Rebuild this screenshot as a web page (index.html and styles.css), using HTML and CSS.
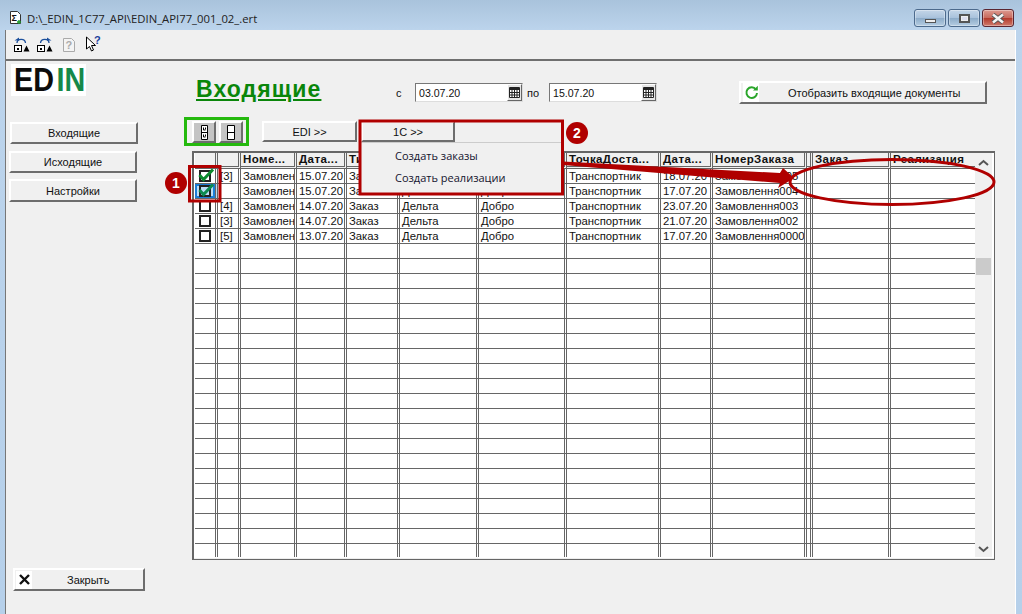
FILE: index.html
```html
<!DOCTYPE html>
<html lang="ru">
<head>
<meta charset="utf-8">
<title>EDIN</title>
<link rel="stylesheet" href="styles.css">
</head>
<body>
<div class="window">
  <header class="titlebar">
    <svg class="doc-icon" width="13" height="14" viewBox="0 0 13 14"><path d="M1.5.5h7l3 3v9h-10z" fill="#fff" stroke="#333"/><text x="2.5" y="10" class="sigma">Σ</text><path d="M10 9v4M8 11h4" stroke="#1a9a2a" stroke-width="1.4"/></svg>
    <span class="title-text">D:\_EDIN_1C77_API\EDIN_API77_001_02_.ert</span>
    <div class="win-btns">
      <span class="win-btn"><i class="glyph-min"></i></span>
      <span class="win-btn"><i class="glyph-max"></i></span>
      <span class="win-btn win-close"><svg width="16" height="11" viewBox="0 0 16 11"><path d="M3 1.5l10 8M13 1.5l-10 8" stroke="#555" stroke-width="4.4"/><path d="M3 1.5l10 8M13 1.5l-10 8" stroke="#f4f4f4" stroke-width="2.6"/></svg></span>
    </div>
  </header>
  <div class="client">
    <div class="toolbar">
      <svg width="18" height="16" viewBox="0 0 18 16"><path d="M4 6C4 1.500 12 1 12.500 6" fill="none" stroke="#1b4f9c" stroke-width="1.3"/><path d="M1.500 3.500h4.500v-3z" fill="#1b4f9c"/><rect x="1.500" y="8.500" width="7" height="6" fill="#fff" stroke="#000"/><rect x="4" y="11" width="2" height="2"/><path d="M10.500 14.500l3-6 3 6z"/></svg>
      <svg width="18" height="16" viewBox="0 0 18 16"><path d="M13 6C13 1.500 5 1 4.500 6" fill="none" stroke="#1b4f9c" stroke-width="1.3"/><path d="M15.500 3.500h-4.500v-3z" fill="#1b4f9c"/><rect x="1.500" y="8.500" width="7" height="6" fill="#fff" stroke="#000"/><rect x="4" y="11" width="2" height="2"/><path d="M10.500 14.500l3-6 3 6z"/></svg>
      <svg class="tool-help" width="14" height="16" viewBox="0 0 14 16"><path d="M1.500 1.500h8l3 3v10h-11z" fill="#f4f4f4" stroke="#aaa"/><text x="3.500" y="12" class="help-q">?</text></svg>
      <svg class="tool-cursor" width="16" height="17" viewBox="0 0 16 17"><path d="M1.500 1v12l3-2.500 2 4.500 2-1-2-4.500h4z" fill="#fff" stroke="#000"/><text x="9" y="8" class="cursor-q">?</text></svg>
    </div>
    <div class="form">
      <aside class="side">
        <div class="logo"><div class="logo-text"><span>ED</span><span class="logo-green">IN</span></div></div>
        <nav class="side-nav">
          <button class="btn nav-in">Входящие</button>
          <button class="btn nav-out">Исходящие</button>
          <button class="btn nav-set">Настройки</button>
        </nav>
        <button class="btn btn-close">
          <span class="btn-icon"><svg width="15" height="15" viewBox="0 0 15 15"><path d="M3 3l9 9M12 3l-9 9" stroke="#111" stroke-width="2.400"/></svg></span>
          <span class="btn-label">Закрыть</span>
        </button>
      </aside>
      <main class="main">
        <div class="head">
          <h1 class="page-title">Входящие</h1>
          <span class="date-label date-from">с</span>
          <div class="date-field"><span class="date-value">03.07.20</span><span class="cal"><svg width="11" height="11" viewBox="0 0 11 11"><path d="M.5.500h10v10H.5z" fill="#fff" stroke="#222"/><path d="M1 1h9v2H1z" fill="#222"/><path d="M3 3v7M5.500 3v7M8 3v7M1 5.500h9M1 8h9" stroke="#222"/></svg></span></div>
          <span class="date-label date-to">по</span>
          <div class="date-field"><span class="date-value">15.07.20</span><span class="cal"><svg width="11" height="11" viewBox="0 0 11 11"><path d="M.5.500h10v10H.5z" fill="#fff" stroke="#222"/><path d="M1 1h9v2H1z" fill="#222"/><path d="M3 3v7M5.500 3v7M8 3v7M1 5.500h9M1 8h9" stroke="#222"/></svg></span></div>
          <button class="btn btn-refresh">
            <span class="btn-icon"><svg width="15" height="15" viewBox="0 0 15 15"><path d="M12 4.500A5.300 5.300 0 1 0 13 8" fill="none" stroke="#2aa52a" stroke-width="2"/><path d="M9 5.500h4.800V.8z" fill="#2aa52a"/></svg></span>
            <span class="btn-label">Отобразить входящие документы</span>
          </button>
        </div>
        <div class="tools">
          <button class="btn btn-square"><svg width="7" height="15" viewBox="0 0 7 15"><path d="M.5.500h6v14h-6zM.5 7.500h6" fill="#fff" stroke="#000"/><path d="M2.500 2.500v2.500h2M2.500 9.500v2.500h2M4.500 2.500v2M4.500 9.500v2" fill="none" stroke="#000"/></svg></button>
          <button class="btn btn-square btn-square-2"><svg width="8" height="15" viewBox="0 0 8 15"><path d="M.5.500h7v14h-7zM.5 7.500h7" fill="#fff" stroke="#000"/></svg></button>
          <button class="btn btn-edi">EDI &gt;&gt;</button>
          <div class="dropdown">
            <button class="btn btn-1c">1С &gt;&gt;</button>
            <div class="menu">
              <div class="menu-item">Создать заказы</div>
              <div class="menu-item">Создать реализации</div>
            </div>
          </div>
        </div>
        <div class="grid">
          <div class="grid-body">
            <table class="data">
              <colgroup><col class="c1"><col class="c2"><col class="c3"><col class="c4"><col class="c5"><col class="c6"><col class="c7"><col class="c8"><col class="c9"><col class="c10"><col class="c11"><col class="c12"><col class="c13"></colgroup>
              <thead>
                <tr><th></th><th></th><th>Номе...</th><th>Дата...</th><th>Тип</th><th></th><th></th><th>ТочкаДоста...</th><th>Дата...</th><th>НомерЗаказа</th><th></th><th>Заказ</th><th>Реализация</th></tr>
              </thead>
              <tbody>
                <tr><td class="chk"><i class="box"></i><svg class="tick" width="17" height="14" viewBox="0 0 17 14"><path d="M1.500 7l4 4.500 9.500-10" fill="none" stroke="#0c8a2e" stroke-width="3"/></svg></td><td>[3]</td><td>Замовлення</td><td>15.07.20</td><td>Заказ</td><td>Дельта</td><td>Добро</td><td>Транспортник</td><td>18.07.20</td><td>Замовлення005</td><td></td><td></td><td></td></tr>
                <tr><td class="chk chk-sel"><i class="box"></i><svg class="tick" width="17" height="14" viewBox="0 0 17 14"><path d="M1.500 7l4 4.500 9.500-10" fill="none" stroke="#0c8a4e" stroke-width="3"/></svg></td><td></td><td>Замовлення</td><td>15.07.20</td><td>Заказ</td><td>Дельта</td><td>Добро</td><td>Транспортник</td><td>17.07.20</td><td>Замовлення004</td><td></td><td></td><td></td></tr>
                <tr><td class="chk"><i class="box"></i></td><td>[4]</td><td>Замовлення</td><td>14.07.20</td><td>Заказ</td><td>Дельта</td><td>Добро</td><td>Транспортник</td><td>23.07.20</td><td>Замовлення003</td><td></td><td></td><td></td></tr>
                <tr><td class="chk"><i class="box"></i></td><td>[3]</td><td>Замовлення</td><td>14.07.20</td><td>Заказ</td><td>Дельта</td><td>Добро</td><td>Транспортник</td><td>21.07.20</td><td>Замовлення002</td><td></td><td></td><td></td></tr>
                <tr><td class="chk"><i class="box"></i></td><td>[5]</td><td>Замовлення</td><td>13.07.20</td><td>Заказ</td><td>Дельта</td><td>Добро</td><td>Транспортник</td><td>17.07.20</td><td>Замовлення0000</td><td></td><td></td><td></td></tr>
                <tr><td></td><td></td><td></td><td></td><td></td><td></td><td></td><td></td><td></td><td></td><td></td><td></td><td></td></tr>
                <tr><td></td><td></td><td></td><td></td><td></td><td></td><td></td><td></td><td></td><td></td><td></td><td></td><td></td></tr>
                <tr><td></td><td></td><td></td><td></td><td></td><td></td><td></td><td></td><td></td><td></td><td></td><td></td><td></td></tr>
                <tr><td></td><td></td><td></td><td></td><td></td><td></td><td></td><td></td><td></td><td></td><td></td><td></td><td></td></tr>
                <tr><td></td><td></td><td></td><td></td><td></td><td></td><td></td><td></td><td></td><td></td><td></td><td></td><td></td></tr>
                <tr><td></td><td></td><td></td><td></td><td></td><td></td><td></td><td></td><td></td><td></td><td></td><td></td><td></td></tr>
                <tr><td></td><td></td><td></td><td></td><td></td><td></td><td></td><td></td><td></td><td></td><td></td><td></td><td></td></tr>
                <tr><td></td><td></td><td></td><td></td><td></td><td></td><td></td><td></td><td></td><td></td><td></td><td></td><td></td></tr>
                <tr><td></td><td></td><td></td><td></td><td></td><td></td><td></td><td></td><td></td><td></td><td></td><td></td><td></td></tr>
                <tr><td></td><td></td><td></td><td></td><td></td><td></td><td></td><td></td><td></td><td></td><td></td><td></td><td></td></tr>
                <tr><td></td><td></td><td></td><td></td><td></td><td></td><td></td><td></td><td></td><td></td><td></td><td></td><td></td></tr>
                <tr><td></td><td></td><td></td><td></td><td></td><td></td><td></td><td></td><td></td><td></td><td></td><td></td><td></td></tr>
                <tr><td></td><td></td><td></td><td></td><td></td><td></td><td></td><td></td><td></td><td></td><td></td><td></td><td></td></tr>
                <tr><td></td><td></td><td></td><td></td><td></td><td></td><td></td><td></td><td></td><td></td><td></td><td></td><td></td></tr>
                <tr><td></td><td></td><td></td><td></td><td></td><td></td><td></td><td></td><td></td><td></td><td></td><td></td><td></td></tr>
                <tr><td></td><td></td><td></td><td></td><td></td><td></td><td></td><td></td><td></td><td></td><td></td><td></td><td></td></tr>
                <tr><td></td><td></td><td></td><td></td><td></td><td></td><td></td><td></td><td></td><td></td><td></td><td></td><td></td></tr>
                <tr><td></td><td></td><td></td><td></td><td></td><td></td><td></td><td></td><td></td><td></td><td></td><td></td><td></td></tr>
                <tr><td></td><td></td><td></td><td></td><td></td><td></td><td></td><td></td><td></td><td></td><td></td><td></td><td></td></tr>
                <tr><td></td><td></td><td></td><td></td><td></td><td></td><td></td><td></td><td></td><td></td><td></td><td></td><td></td></tr>
                <tr><td></td><td></td><td></td><td></td><td></td><td></td><td></td><td></td><td></td><td></td><td></td><td></td><td></td></tr>
              </tbody>
            </table>
          </div>
          <div class="scrollbar">
            <svg width="11" height="8" viewBox="0 0 11 8"><path d="M1 6l4.500-4 4.500 4" fill="none" stroke="#555" stroke-width="2"/></svg>
            <span class="thumb"></span>
            <svg width="11" height="8" viewBox="0 0 11 8"><path d="M1 2l4.500 4 4.500-4" fill="none" stroke="#555" stroke-width="2"/></svg>
          </div>
        </div>
      </main>
    </div>
  </div>
  <svg class="notes" width="1022" height="614" viewBox="0 0 1022 614">
    <rect x="185.500" y="118.500" width="62" height="26" fill="none" stroke="#25b90e" stroke-width="3"/>
    <rect x="189.500" y="166.500" width="30.500" height="34.500" fill="none" stroke="#b00000" stroke-width="3"/>
    <rect x="360" y="121" width="202.500" height="73" fill="none" stroke="#b00000" stroke-width="3"/>
    <path d="M563 161.500L780 173 783 168 794 178 778 188 780 183 563 165z" fill="#b00000"/>
    <ellipse cx="892" cy="182" rx="102" ry="22.500" fill="none" stroke="#b00000" stroke-width="3"/>
    <circle cx="176" cy="183" r="11" fill="#b00000"/>
    <text x="176" y="188" class="badge-num">1</text>
    <circle cx="577" cy="133" r="11" fill="#b00000"/>
    <text x="577" y="138" class="badge-num">2</text>
  </svg>
</div>
</body>
</html>
```
FILE: styles.css
```css
* { box-sizing: border-box; }
html, body { margin: 0; padding: 0; }
body { width: 1022px; height: 614px; overflow: hidden; font-family: "Liberation Sans", Arial, sans-serif; font-size: 12px; color: #111; }

.window { position: relative; width: 1022px; height: 614px; display: flex; flex-direction: column; background: linear-gradient(#a9c3dc 0, #bcd4ec 30px, #b6d0ea 100%); padding: 0 6px 0 5px; }

.titlebar { height: 30px; display: flex; align-items: center; padding: 0 2px 0 4px; flex: none; }
.doc-icon { margin-right: 5px; margin-top: 6px; }
.sigma { font: bold 9px "Liberation Sans", sans-serif; fill: #111; }
.title-text { font-family: "Open Sans", sans-serif; font-size: 11.3px; color: #222; margin-top: 6px; }
.win-btns { margin-left: auto; display: flex; gap: 2px; align-self: flex-start; margin-top: 9px; }
.win-btn { width: 32px; height: 18px; border: 1px solid #4c6a8c; border-radius: 3px; background: linear-gradient(#c4d6e8 0, #a9c2dc 48%, #8dacc9 52%, #b5cde2 100%); display: flex; align-items: center; justify-content: center; box-shadow: inset 0 0 0 1px rgba(255,255,255,.35); }
.glyph-min { width: 11px; height: 4px; margin-top: 5px; background: #eee; border: 1px solid #555; }
.glyph-max { width: 11px; height: 9px; background: #dde; border: 2px solid #555; box-shadow: inset 0 0 0 1px #eee; }
.win-close { background: linear-gradient(#dd9a90 0, #c86a5e 48%, #b33a2c 52%, #cf7a6c 100%); border-color: #5a2530; }

.client { flex: 1; display: flex; flex-direction: column; background: #f0f0f0; border-left: 1px solid #777; border-right: 1px solid #fff; min-height: 0; }
.toolbar { height: 31px; flex: none; display: flex; align-items: flex-start; padding: 7px 0 0 7px; border-bottom: 2px solid #6f6f6f; }
.toolbar svg { margin-right: 5px; }
.toolbar .tool-help { margin: 0 9px 0 3px; }
.toolbar .tool-cursor { margin-top: -1px; }
.help-q { font: bold 11px "Liberation Sans", sans-serif; fill: #aaa; }
.cursor-q { font: bold 11px "Liberation Sans", sans-serif; fill: #1b3f9c; }

.form { flex: 1; display: flex; min-height: 0; }
.side { width: 186px; flex: none; display: flex; flex-direction: column; padding-left: 1px; }
.logo { width: 75px; height: 32px; margin: 3px 0 0 4px; background: #fff; padding-left: 3px; font-weight: bold; font-size: 33px; line-height: 32px; white-space: nowrap; color: #0c0c0c; overflow: hidden; }
.logo-text { transform: scaleX(.87); transform-origin: left; }
.logo-green { color: #16894a; margin-left: 3px; }

.btn { font-family: "Liberation Sans", Arial, sans-serif; font-size: 11px; color: #111; background: #f0f0f0; border: 2px solid; border-color: #fff #6d6d6d #6d6d6d #fff; padding: 0; display: flex; align-items: center; justify-content: center; flex: none; }
.side-nav { display: flex; flex-direction: column; margin-top: 26px; }
.nav-in { width: 128px; height: 22px; margin-left: 3px; }
.nav-out { width: 128px; height: 22px; margin: 7px 0 0 2px; }
.nav-set { width: 128px; height: 23px; margin: 6px 0 0 2px; }
.btn-close { width: 132px; height: 23px; margin: auto 0 23px 6px; justify-content: flex-start; padding-left: 1px; }
.btn-icon { width: 16px; height: 18px; background: #fff; display: flex; align-items: center; justify-content: center; flex: none; }
.btn-close .btn-label { margin-left: 35px; }

.main { flex: 1; min-width: 0; padding-right: 20px; display: flex; flex-direction: column; }
.head { height: 60px; flex: none; display: flex; align-items: center; padding-top: 3px; }
.page-title { margin: 0 0 7px 4px; width: 124px; font-size: 23px; line-height: 24px; letter-spacing: 1.1px; font-weight: bold; color: #0a860a; text-decoration: underline; white-space: nowrap; }
.date-label { font-size: 11px; }
.date-from { margin-left: 76px; width: 19px; }
.date-to { width: 22px; margin-left: 4px; }
.date-field { width: 108px; height: 19px; display: flex; align-items: center; background: #fff; border: 1px solid; border-color: #777 #ddd #ddd #777; }
.date-value { flex: 1; padding-left: 3px; font-size: 10.6px; }
.cal { width: 15px; height: 17px; background: #e6e6e6; border: 1px solid; border-color: #fff #666 #666 #fff; display: flex; align-items: center; justify-content: center; }
.btn-refresh { width: 248px; height: 23px; margin: 0 8px 0 auto; justify-content: flex-start; padding-left: 2px; }
.btn-refresh .btn-icon { height: 19px; }
.btn-refresh .btn-label { margin-left: 29px; }

.tools { display: flex; height: 22px; flex: none; margin-bottom: 8px; }
.btn-square { width: 24px; height: 22px; background: #c4c4c4; }
.btn-square-2 { margin-left: 3px; }
.btn-edi { width: 95px; height: 21px; margin-left: 19px; }
.dropdown { position: relative; margin-left: 4px; }
.btn-1c { width: 94px; height: 21px; }
.menu { position: absolute; left: 0; top: 21px; width: 200px; height: 52px; background: #f0f0f0; border-top: 1px solid #ccc; padding: 2px 0 0 34px; font-family: "Open Sans", sans-serif; font-size: 11px; color: #14142e; z-index: 2; }
.menu-item { height: 22px; line-height: 22px; white-space: nowrap; }

.grid { width: 803px; height: 409px; flex: none; display: flex; background: #fff; border: solid #666; border-width: 2px 1px 1px 2px; box-shadow: inset 0 -1px 0 #eee; padding-bottom: 1px; padding-left: 1px; }
.grid-body { width: 780px; height: 404px; overflow: hidden; flex: none; }
.data { width: 780px; table-layout: fixed; border-collapse: separate; border-spacing: 0; }
.c1 { width: 23px; } .c2 { width: 23px; } .c3 { width: 56px; } .c4 { width: 50px; } .c5 { width: 53px; }
.c6 { width: 79px; } .c7 { width: 88px; } .c8 { width: 94px; } .c9 { width: 52px; } .c10 { width: 94px; }
.c11 { width: 6px; } .c12 { width: 78px; } .c13 { width: 84px; }
.data th, .data td { padding: 0 0 0 2px; overflow: hidden; white-space: nowrap; border-right: 3px double #666; text-align: left; font-size: 11.3px; }
.data th:last-child, .data td:last-child { border-right: 0; }
.data th { height: 16px; line-height: 13px; background: #f0f0f0; font-weight: bold; font-size: 11.5px; letter-spacing: .4px; border-bottom: 3px double #666; }
.data td { height: 15px; line-height: 14px; border-bottom: 1px solid #666; }
.data td.chk { position: relative; padding: 0; overflow: visible; }
.chk-sel { background: #bcdcf5; box-shadow: inset 0 0 0 2px #1c7ed6; }
.box { position: absolute; left: 4px; top: 1px; width: 12px; height: 12px; border: 2px solid #222; background: #fff; }
.chk-sel .box { background: #bcdcf5; }
.tick { position: absolute; left: 3px; top: -1px; }

.scrollbar { width: 17px; height: 404px; flex: none; background: #f0f0f0; display: flex; flex-direction: column; align-items: center; position: relative; }
.scrollbar svg { position: absolute; left: 3px; }
.scrollbar svg:first-child { top: 6px; }
.scrollbar svg:last-child { bottom: 4px; }
.thumb { width: 15px; height: 17px; background: #cbcbcb; margin-top: 105px; }

.notes { position: absolute; left: 0; top: 0; pointer-events: none; z-index: 5; }
.badge-num { font: bold 14px "Liberation Sans", sans-serif; fill: #fff; text-anchor: middle; }
```
